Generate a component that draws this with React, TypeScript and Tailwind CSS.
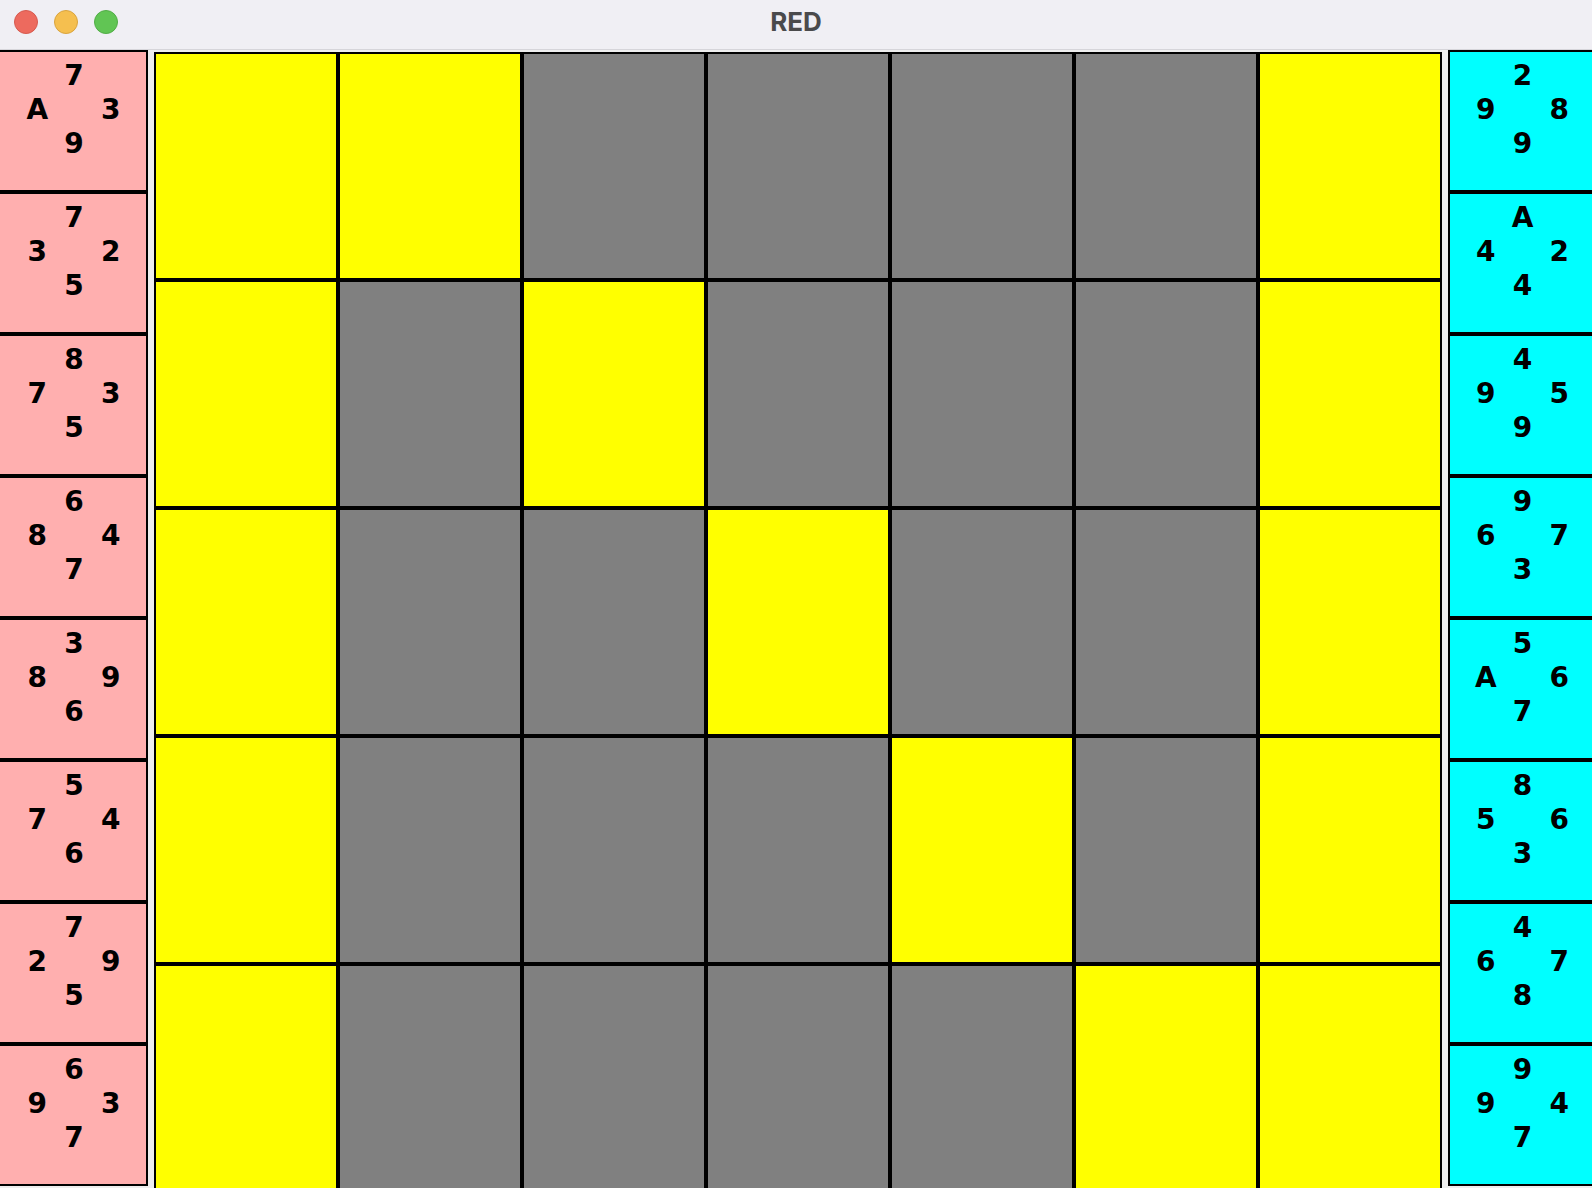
const leftCards = [
  ["7", "A", "3", "9"],
  ["7", "3", "2", "5"],
  ["8", "7", "3", "5"],
  ["6", "8", "4", "7"],
  ["3", "8", "9", "6"],
  ["5", "7", "4", "6"],
  ["7", "2", "9", "5"],
  ["6", "9", "3", "7"],
]

const rightCards = [
  ["2", "9", "8", "9"],
  ["A", "4", "2", "4"],
  ["4", "9", "5", "9"],
  ["9", "6", "7", "3"],
  ["5", "A", "6", "7"],
  ["8", "5", "6", "3"],
  ["4", "6", "7", "8"],
  ["9", "9", "4", "7"],
]

// Y = yellow, G = gray
const board = [
  "YYGGGGY",
  "YGYGGGY",
  "YGGYGGY",
  "YGGGYGY",
  "YGGGGYY",
]

function Card({ values, color }: { values: string[]; color: "pink" | "cyan" }) {
  const [top, left, right, bottom] = values
  return (
    <div
      className={`h-[142px] w-[150px] shrink-0 border-2 border-black pt-[7px] ${
        color === "pink" ? "bg-[#ffafaf] pl-[2px]" : "bg-[#00ffff] pr-[1px]"
      }`}
    >
      <div className="mx-auto grid w-[110px] grid-cols-3 text-center text-[28px] leading-[34px] font-bold text-black">
        <span />
        <span>{top}</span>
        <span />
        <span>{left}</span>
        <span />
        <span>{right}</span>
        <span />
        <span>{bottom}</span>
        <span />
      </div>
    </div>
  )
}

function TitleBar() {
  return (
    <div className="relative flex h-[50px] shrink-0 items-center border-b border-[#d6d5da] bg-[#f0eff4] pb-[6px]">
      <div className="flex items-center gap-[16px] pl-[14px]">
        <span className="h-[24px] w-[24px] rounded-full border border-[#d65a4f] bg-[#ed6a5e]" />
        <span className="h-[24px] w-[24px] rounded-full border border-[#d9a43f] bg-[#f5bf4f]" />
        <span className="h-[24px] w-[24px] rounded-full border border-[#52ad47] bg-[#61c554]" />
      </div>
      <div className="absolute inset-0 flex items-center justify-center pb-[7px] font-['Inter',sans-serif] text-[26px] font-bold text-[#4a4a4c]">
        RED
      </div>
    </div>
  )
}

export default function App() {
  return (
    <div className="flex h-[1188px] w-[1592px] flex-col overflow-hidden bg-[#eeeeee] font-['DejaVu_Sans',sans-serif]">
      <TitleBar />
      <div className="flex min-h-0 flex-1 items-start overflow-hidden">
        <div className="-ml-[2px] flex w-[150px] shrink-0 flex-col">
          {leftCards.map((c, i) => (
            <Card key={i} values={c} color="pink" />
          ))}
        </div>

        <div className="ml-[6px] mt-[2px] grid w-[1288px] shrink-0 grid-cols-7">
          {board.flatMap((row, r) =>
            row.split("").map((cell, c) => (
              <div
                key={`${r}-${c}`}
                className={`h-[228px] border-2 border-black ${cell === "Y" ? "bg-[#ffff00]" : "bg-[#808080]"}`}
              />
            ))
          )}
        </div>

        <div className="ml-[6px] flex w-[150px] shrink-0 flex-col">
          {rightCards.map((c, i) => (
            <Card key={i} values={c} color="cyan" />
          ))}
        </div>
      </div>
    </div>
  )
}
